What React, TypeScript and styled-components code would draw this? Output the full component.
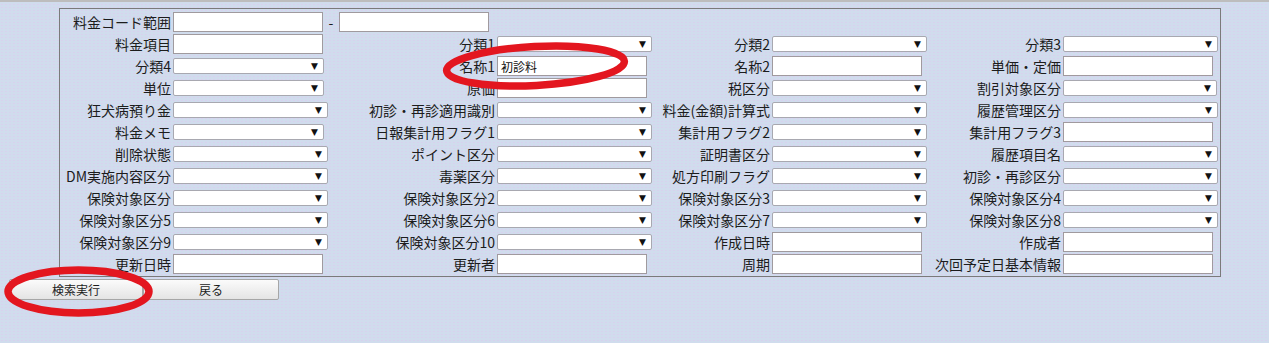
import styled, { createGlobalStyle } from "styled-components";

type Field = {
    label: string;
    kind: "text" | "select";
    value?: string;
    w?: number;
};

const rows: Field[][] = [
    [
        { label: "料金項目", kind: "text" },
        { label: "分類1", kind: "select" },
        { label: "分類2", kind: "select" },
        { label: "分類3", kind: "select" },
    ],
    [
        { label: "分類4", kind: "select", w: 151 },
        { label: "名称1", kind: "text", value: "初診料" },
        { label: "名称2", kind: "text" },
        { label: "単価・定価", kind: "text" },
    ],
    [
        { label: "単位", kind: "select", w: 151 },
        { label: "原価", kind: "text" },
        { label: "税区分", kind: "select" },
        { label: "割引対象区分", kind: "select", w: 154 },
    ],
    [
        { label: "狂犬病預り金", kind: "select" },
        { label: "初診・再診適用識別", kind: "select" },
        { label: "料金(金額)計算式", kind: "select" },
        { label: "履歴管理区分", kind: "select" },
    ],
    [
        { label: "料金メモ", kind: "select", w: 151 },
        { label: "日報集計用フラグ1", kind: "select" },
        { label: "集計用フラグ2", kind: "select" },
        { label: "集計用フラグ3", kind: "text" },
    ],
    [
        { label: "削除状態", kind: "select" },
        { label: "ポイント区分", kind: "select" },
        { label: "証明書区分", kind: "select" },
        { label: "履歴項目名", kind: "select" },
    ],
    [
        { label: "DM実施内容区分", kind: "select" },
        { label: "毒薬区分", kind: "select" },
        { label: "処方印刷フラグ", kind: "select" },
        { label: "初診・再診区分", kind: "select" },
    ],
    [
        { label: "保険対象区分", kind: "select" },
        { label: "保険対象区分2", kind: "select" },
        { label: "保険対象区分3", kind: "select" },
        { label: "保険対象区分4", kind: "select" },
    ],
    [
        { label: "保険対象区分5", kind: "select" },
        { label: "保険対象区分6", kind: "select" },
        { label: "保険対象区分7", kind: "select" },
        { label: "保険対象区分8", kind: "select" },
    ],
    [
        { label: "保険対象区分9", kind: "select" },
        { label: "保険対象区分10", kind: "select" },
        { label: "作成日時", kind: "text" },
        { label: "作成者", kind: "text" },
    ],
    [
        { label: "更新日時", kind: "text" },
        { label: "更新者", kind: "text" },
        { label: "周期", kind: "text" },
        { label: "次回予定日基本情報", kind: "text" },
    ],
];

export default function App() {
    return (
        <Page>
            <GlobalStyle />
            <TopBar />
            <SearchBox>
                <Grid>
                    <Label>料金コード範囲</Label>
                    <RangeCell>
                        <TextBox />
                        <Dash>-</Dash>
                        <TextBox />
                    </RangeCell>
                    {rows.map((row, i) =>
                        row.map((f, j) => [
                            <Label key={`l${i}-${j}`}>{f.label}</Label>,
                            <Cell key={`c${i}-${j}`}>
                                {f.kind === "text" ? (
                                    <TextBox>{f.value}</TextBox>
                                ) : (
                                    <SelectBox $w={f.w ?? 155}>
                                        <Arrow>▼</Arrow>
                                    </SelectBox>
                                )}
                            </Cell>,
                        ])
                    )}
                </Grid>
            </SearchBox>
            <Buttons>
                <Button $w={134}>検索実行</Button>
                <Button $w={136}>戻る</Button>
            </Buttons>
            <Marks width="1269" height="343" viewBox="0 0 1269 343">
                <ellipse cx="535.5" cy="66" rx="89" ry="19.5" fill="none" stroke="#e3161f" strokeWidth="7.5" transform="rotate(-3 535.5 66)" />
                <ellipse cx="78.5" cy="291.5" rx="70.5" ry="21.5" fill="none" stroke="#e3161f" strokeWidth="7.5" />
            </Marks>
        </Page>
    );
}

const GlobalStyle = createGlobalStyle`
    html, body {
        margin: 0;
        padding: 0;
        background: #d0dced;
    }
    body {
        font-family: "Noto Sans CJK JP", "Noto Sans", sans-serif;
        color: #1c1c1c;
    }
`

const Page = styled.div`
    position: relative;
    width: 1269px;
    height: 343px;
    overflow: hidden;
    background-color: #d0dced;
    background-image: radial-gradient(circle, rgba(226, 196, 240, 0.45) 0.6px, transparent 0.9px);
    background-size: 4px 3px;
`

const TopBar = styled.div`
    height: 2px;
    background: #bdbdbd;
`

const SearchBox = styled.div`
    margin: 6px 0 0 59px;
    width: 1160px;
    padding: 2px 0 1px;
    border: 1px solid #7a7a7a;
`

const Grid = styled.div`
    display: grid;
    grid-template-columns: 113px 157px 167px 158px 117px 158px 133px 157px;
    grid-auto-rows: 22px;
`

const Label = styled.div`
    display: flex;
    align-items: center;
    justify-content: flex-end;
    padding-right: 2px;
    font-size: 14px;
    line-height: 1;
    white-space: nowrap;
`

const Cell = styled.div`
    display: flex;
    align-items: center;
`

const RangeCell = styled.div`
    grid-column: 2 / -1;
    display: flex;
    align-items: center;
`

const Dash = styled.span`
    width: 16px;
    text-align: center;
    font-size: 14px;
`

const TextBox = styled.div`
    box-sizing: border-box;
    width: 150px;
    height: 20px;
    padding: 0 3px;
    display: flex;
    align-items: center;
    background: #ffffff;
    border: 1px solid #a09a9e;
    font-size: 12px;
    color: #111111;
`

const SelectBox = styled.div<{ $w: number }>`
    box-sizing: border-box;
    width: ${(p) => p.$w}px;
    height: 16px;
    display: flex;
    align-items: center;
    justify-content: flex-end;
    padding-right: 5px;
    background: #ffffff;
    border: 1px solid #a8a8b0;
    border-radius: 2px;
`

const Arrow = styled.span`
    font-family: "DejaVu Sans", sans-serif;
    font-size: 9px;
    line-height: 1;
    color: #111111;
`

const Buttons = styled.div`
    display: flex;
    margin: 2px 0 0 9px;
`

const Button = styled.button<{ $w: number }>`
    box-sizing: border-box;
    width: ${(p) => p.$w}px;
    height: 21px;
    padding: 0;
    font-family: "Noto Sans CJK JP", sans-serif;
    font-size: 12px;
    color: #1c1c1c;
    background: linear-gradient(#fbfbfb, #e4e4e4);
    border: 1px solid #a6a6a6;
    border-radius: 2px;
`

const Marks = styled.svg`
    position: absolute;
    left: 0;
    top: 0;
    pointer-events: none;
`
